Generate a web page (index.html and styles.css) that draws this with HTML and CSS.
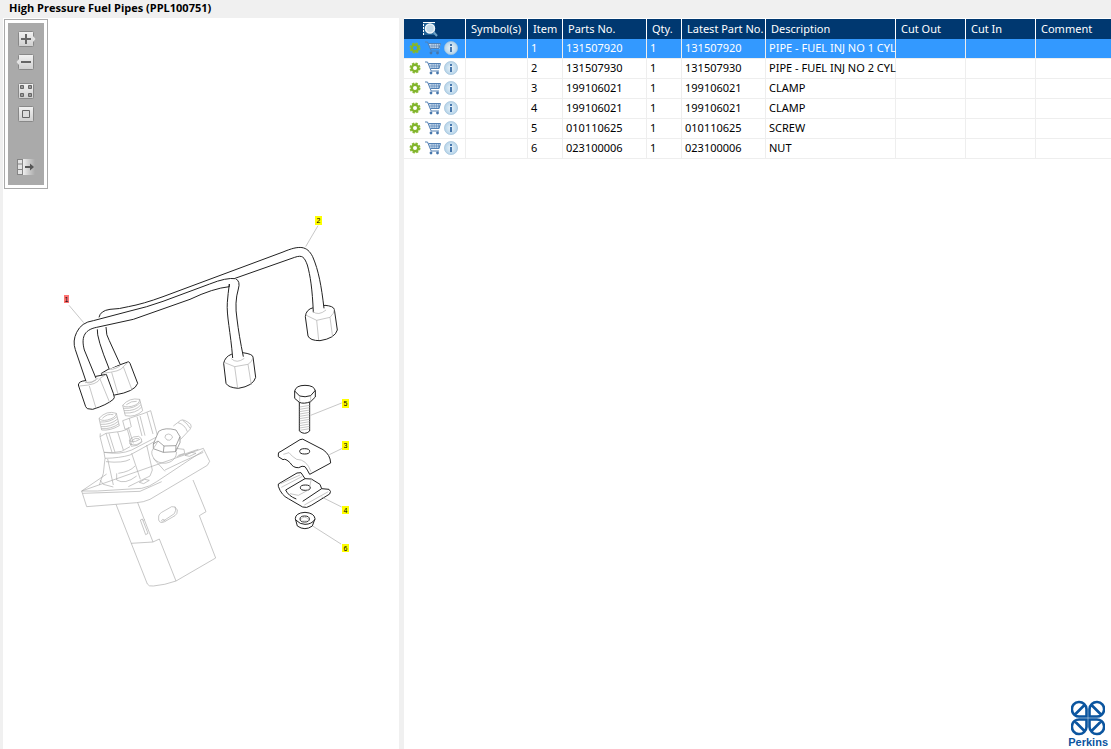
FILE: index.html
```html
<!DOCTYPE html>
<html lang="en">
  <head>
    <meta charset="utf-8">
    <title>High Pressure Fuel Pipes</title>
    <link rel="stylesheet" href="styles.css">
  </head>
  <body>
    <svg width="0" height="0" class="defs" aria-hidden="true">
      <defs>
        <linearGradient id="face" x1="0" y1="0" x2="0" y2="1">
          <stop offset="0" stop-color="#f2f2f2"/><stop offset="1" stop-color="#cfcfcf"/>
        </linearGradient>
        <linearGradient id="fade">
          <stop offset="0" stop-color="#eee"/><stop offset="1" stop-color="#aaa"/>
        </linearGradient>
        <radialGradient id="glass">
          <stop offset="0" stop-color="#eef6fb"/><stop offset="1" stop-color="#b3d2e8"/>
        </radialGradient>
        <symbol id="gear" viewBox="0 0 12 12">
          <circle cx="6" cy="6" r="4.7" fill="none" stroke="#8abb35" stroke-width="1.6" stroke-dasharray="2.3 1.39"/>
          <circle cx="6" cy="6" r="3.2" fill="none" stroke="#82b52c" stroke-width="2.4"/>
        </symbol>
        <symbol id="cart" viewBox="0 0 16 14">
          <path d="M3.500 3h12l-1 5H6z" fill="#c3d8ec"/>
          <path d="M0 1h2.500l3.700 9H14M3.500 2.500h12L14 7.500H5.500" fill="none" stroke="#5482b5"/>
          <path d="M7 3v5M9.200 3v5M11.400 3v5M13.400 3v5M4.400 5h10.400" fill="none" stroke="#5482b5" stroke-width=".6"/>
          <circle cx="6" cy="12" r="1.4" fill="#4676ab"/><circle cx="12.500" cy="12" r="1.4" fill="#4676ab"/>
        </symbol>
        <symbol id="info" viewBox="0 0 14 14">
          <circle cx="7" cy="7" r="6.6" fill="url(#glass)" stroke="#a3c3db" stroke-width=".7"/>
          <path d="M6 3h2v2H6zM6 6h2v5H6z" fill="#4878ad"/>
        </symbol>
      </defs>
    </svg>

    <h1 class="title">High Pressure Fuel Pipes (PPL100751)</h1>
    <main class="panes">
      <section class="drawing">
        <div class="toolbar">
          <div class="tools">
            <button aria-label="Zoom in"><svg width="20" height="16" viewBox="0 0 20 16">
              <rect x="2.5" y=".5" width="15" height="15" rx="1" fill="url(#face)" stroke="#888"/>
              <path d="M17 5l2.500 3-2.500 3z" fill="#e4e4e4"/>
              <path d="M10 3v10M5 8h10" stroke="#666" stroke-width="2"/></svg></button>
            <button aria-label="Zoom out"><svg width="20" height="16" viewBox="0 0 20 16">
              <rect x="2.5" y=".5" width="15" height="15" rx="1" fill="url(#face)" stroke="#888"/>
              <path d="M3 5L.5 8 3 11z" fill="#e4e4e4"/>
              <path d="M5 8h10" stroke="#666" stroke-width="2"/></svg></button>
            <button class="fit" aria-label="Fit page"><svg width="20" height="16" viewBox="0 0 20 16">
              <rect x="2.5" y=".5" width="15" height="15" rx="1" fill="url(#face)" stroke="#888"/>
              <path d="M4.500 2.500h3v3h-3zM12.500 2.500h3v3h-3zM4.500 10.500h3v3h-3zM12.500 10.500h3v3h-3z" fill="#999" stroke="#666"/></svg></button>
            <button aria-label="Actual size"><svg width="20" height="16" viewBox="0 0 20 16">
              <rect x="2.5" y=".5" width="15" height="15" rx="1" fill="url(#face)" stroke="#888"/>
              <path d="M6.500 4.500h7v7h-7z" fill="#ddd" stroke="#666"/></svg></button>
            <button class="move" aria-label="Hide list"><svg width="20" height="16" viewBox="0 0 20 16">
              <rect x="7" y="0" width="12" height="16" fill="url(#fade)"/>
              <path d="M1 0h5v16H1z" fill="#e4e4e4"/>
              <path d="M1.500 0v16M1 .5h5M1 5h5M1 10.500h5M1 15.500h5M6.500 0v16" fill="none" stroke="#858585"/>
              <path d="M9 8h6" stroke="#555" stroke-width="2"/>
              <path d="M14 4.500l4 3.500-4 3.500z" fill="#555"/></svg></button>
          </div>
        </div>

        <!-- drawing units are a third of a pixel -->
        <svg class="diagram" viewBox="0 0 1188 1260" role="img" aria-label="Exploded view of the fuel pipes">
          <!-- pump -->
          <g class="faint" transform="translate(201 603)">
            <path d="M35 303L400 175L419 214L412 226L240 328Q220 337 200 338L50 350L35 303L82 303L215 295Q240 290 260 275L400 182"/>
            <path d="M35 303L110 252M38 310L210 304L275 275M320 200L385 178M285 240L335 216L400 187M345 196L365 187L378 190L358 199ZM208 277L224 268L238 271L221 281Z"/>
            <path d="M102 187L105 205Q150 204 180 195L262 150Q270 143 264 136M102 187Q150 195 185 180L258 142M105 205L100 250L88 285M113 207L130 285M185 190L211 268M230 165L247 240L240 258L175 290"/>
            <path d="M108 215Q160 220 180 208M145 250Q180 245 195 228M140 270Q165 285 200 258M140 250L140 270M90 270L100 283L130 291"/>
            <path d="M90 140L102 187Q130 190 155 184L180 170M90 140L108 130L153 124L172 118L185 165M108 130L126 187M117 130L135 187M143 126L160 180M90 140L91 130"/>
            <path d="M87 85L95 120M139 70L148 107M95 120Q120 123 148 107M87 85Q110 60 139 70Q137 84 112 90Q94 94 87 85M97 85Q112 70 130 74M90 96Q120 98 141 80M92 103Q122 105 143 87M93 110Q123 112 145 94M94 116Q124 118 147 101"/>
            <path d="M158 46L166 77M209 28L218 62M166 77Q197 83 218 62M158 46Q178 22 209 28Q209 43 185 49Q164 53 158 46M169 44Q185 32 200 34M160 55Q195 57 211 37M162 62Q197 64 213 44M163 69Q198 71 215 51"/>
            <path d="M158 92L178 85L222 70L242 62L262 135M158 92L165 118L182 112M178 85L184 111M201 80L216 138M210 78L225 137M231 67L249 132M175 112L190 160"/>
            <path d="M178 150Q190 137 206 139Q218 146 215 154Q200 170 180 162ZM180 160L184 169Q202 170 217 155M185 152Q196 142 207 146M181 154Q197 158 211 147"/>
            <path d="M310 108L332 91Q342 86 362 103Q366 110 360 118L332 148M338 91Q352 100 360 114M324 98Q345 104 352 125M317 175L342 178L344 190L325 196"/>
            <path class="mid" d="M250 162L266 124Q285 111 318 120L330 140L318 167L282 168L264 153ZM282 168L280 187L317 185L318 167M280 187L250 176L250 162M330 140V158L317 185"/>
            <path d="M285 142Q284 133 295 132Q308 134 307 144Q300 154 291 150ZM249 177Q239 190 255 210Q277 226 300 216Q318 208 320 186M250 205L285 244M264 154L250 176"/>
          </g>
          <g class="faint" transform="translate(321 873)">
            <path d="M18 73L63 188L112 312Q116 320 130 318Q165 315 198 303L317 234L268 107L288 95L249 0"/>
            <path d="M83 68L129 186L148 177L198 303M63 190L129 186M91 120L97 117L114 160L107 164ZM100 122L104 118"/>
            <path d="M146 108Q148 101 155 97L185 80Q196 77 202 90Q203 102 195 107L164 125Q150 132 146 120ZM154 124Q157 113 166 123M195 80Q200 91 193 101L157 125"/>
          </g>

          <!-- pipe 2, then pipe 1 in front of it -->
          <g class="line">
            <path class="solid" transform="translate(141 63)" d="M154 490L178 476L236 455L240 460L263 520Q255 545 194 555L176 560Z"/>
            <path class="solid" transform="translate(561 63)" d="M346 320Q348 298 370 293L405 286Q430 288 433 298L442 360Q435 385 390 392Q360 392 354 378Z"/>
            <path class="fill" d="M319 541L283 443Q278 370 321 361C370 350 380 365 480 327L861 183C910 168 918 180 936 223Q950 260 963 358L931 370Q925 270 913 228C905 203 900 195 881 203L696 268L400 370Q300 390 309 440L351 525Z"/>
            <path d="M319 541Q280 445 283 421M288 385Q292 365 321 361Q350 360 376 353Q420 345 480 323L840 189C890 168 912 170 929 203C947 245 955 290 963 358M931 370C928 300 922 260 913 228C904 204 898 197 875 205L696 268M351 525L319 455Q309 440 309 414"/>
            <path class="solid" transform="translate(141 63)" d="M85 525Q86 514 105 512L138 499L169 493L190 550Q196 565 190 568Q170 585 128 598L112 596L107 590Z"/>
            <path class="solid" transform="translate(561 63)" d="M101 460Q105 440 124 433L158 428Q188 432 189 441L197 502Q190 528 145 535Q115 533 108 520Z"/>
            <path class="fill" d="M249 577L214 462Q210 405 266 396L386 366L600 290C660 266 705 255 708 280L700 340L721 503L689 507Q670 380 680 285L591 309L391 387Q300 405 260 415Q238 425 241 463L279 568Z"/>
            <path d="M249 577L217 482Q208 456 221 430Q235 400 271 395L381 366Q430 355 480 337L620 285Q670 265 698 269Q713 277 706 300Q694 340 702 390Q708 440 721 503M689 507C683 430 670 380 673 340Q675 315 679 285V293Q630 298 561 331L391 391L281 415C240 423 235 449 244 483L279 568"/>
          </g>
          <g class="faint" transform="translate(141 63)">
            <path class="edge" d="M88 528Q145 525 150 505L169 493M118 528L138 595M150 507L180 580M108 515Q115 525 138 510M105 518Q125 520 145 505M154 490Q215 485 220 470L236 455M185 487L204 552M220 470L246 540M176 476Q185 483 210 468M101 338L57 286"/>
          </g>
          <g class="faint" transform="translate(561 63)">
            <path class="edge" d="M102 457L134 470L174 463Q188 455 189 441M134 470L143 535M174 463L184 525M124 446Q140 462 163 445M347 315L380 331L420 322Q433 310 433 298M380 331L386 390M420 322L428 382M368 304Q385 319 408 300M347 110L384 47"/>
          </g>

          <!-- screw, clamps and nut -->
          <g transform="translate(786 558)">
            <g class="line">
              <path class="solid" d="M103 78V168Q119 182 134 168V78Z"/>
              <path class="solid" d="M89 48Q93 31 120 31Q148 31 151 48V66L137 80Q116 88 103 82L89 70Z"/>
              <path d="M89 48L104 63Q120 68 137 62L151 46"/>
              <path class="solid" d="M40 237Q38 232 48 229L105 194Q114 190 120 196L174 224Q196 239 197 264L134 298Q127 284 120 275Q112 271 101 278Q84 279 76 264Q61 249 54 254L40 245Z"/>
              <path class="solid" d="M40 327L96 294L108 293L120 311L139 312L165 328L170 341L192 343Q200 349 194 357L139 391Q124 401 113 396L70 371Q49 361 40 334Z"/>
              <path d="M62 345L120 311M113 379L170 341M62 345Q70 363 94 372"/>
              <path class="solid" d="M91 431Q91 414 120 412Q148 414 150 431L142 453Q120 469 97 453Z"/>
              <path d="M91 434Q106 449 120 448Q140 448 150 433"/>
              <ellipse cx="119" cy="229" rx="15" ry="8"/><ellipse cx="121" cy="338" rx="15" ry="8"/><ellipse cx="119" cy="432" rx="14" ry="9"/>
            </g>
            <g class="faint">
              <path class="edge" d="M104 63V80M137 63V79M104 96L134 91M104 103L134 98M104 110L134 105M104 117L134 112M104 124L134 119M104 131L134 126M104 138L134 133M104 145L134 140M104 152L134 147M104 159L134 154M104 166L134 161M108 433Q118 420 130 433M111 438H128M55 238L72 233Q80 244 95 253Q125 253 138 290M47 326L105 300M49 337L112 304M75 356L100 361L132 344L139 312M118 390L190 350"/>
              <path class="edge" d="M137 121L230 84M193 239L232 220M170 366L230 396M143 453L228 507"/>
            </g>
          </g>

          <g class="tags">
            <rect class="picked" x="183" y="318" width="15" height="24"/><text x="190" y="338">1</text>
            <rect x="936" y="81" width="21" height="27"/><text x="946" y="103">2</text>
            <rect x="1017" y="630" width="21" height="27"/><text x="1027" y="651">5</text>
            <rect x="1017" y="756" width="21" height="27"/><text x="1027" y="778">3</text>
            <rect x="1017" y="951" width="21" height="24"/><text x="1027" y="971">4</text>
            <rect x="1017" y="1065" width="21" height="24"/><text x="1027" y="1085">6</text>
          </g>
        </svg>
      </section>

      <section class="parts">
        <table>
          <colgroup>
            <col class="c-icons"><col class="c-symbol"><col class="c-item"><col class="c-part"><col class="c-qty"><col class="c-part"><col class="c-desc"><col class="c-cut"><col class="c-cut"><col>
          </colgroup>
          <thead>
            <tr>
              <th class="find"><button aria-label="Search parts"><svg width="18" height="16" viewBox="0 0 18 16">
                <rect x="2" y="1" width="12" height="13" fill="#1d6096"/>
                <path d="M2 1.500h12" stroke="#fff"/>
                <path d="M2.500 3v11" stroke="#fff" stroke-dasharray="2 1"/>
                <circle cx="9" cy="7.500" r="4.500" fill="#c4dbea" stroke="#eef5fa" stroke-width="1.500"/>
                <path d="M12.500 11l3.500 4" stroke="#6a9fc4" stroke-width="2"/></svg></button></th>
              <th>Symbol(s)</th><th>Item</th><th>Parts No.</th><th>Qty.</th><th>Latest Part No.</th><th>Description</th><th>Cut Out</th><th>Cut In</th><th>Comment</th>
            </tr>
          </thead>
          <tbody>
            <tr class="selected">
              <td><div class="icons"><button aria-label="Options"><svg width="12" height="12"><use href="#gear"/></svg></button><button aria-label="Add to cart"><svg width="16" height="14"><use href="#cart"/></svg></button><button aria-label="Information"><svg width="14" height="14"><use href="#info"/></svg></button></div></td>
              <td></td><td>1</td><td>131507920</td><td>1</td><td>131507920</td><td>PIPE - FUEL INJ NO 1 CYL</td><td></td><td></td><td></td>
            </tr>
            <tr>
              <td><div class="icons"><button aria-label="Options"><svg width="12" height="12"><use href="#gear"/></svg></button><button aria-label="Add to cart"><svg width="16" height="14"><use href="#cart"/></svg></button><button aria-label="Information"><svg width="14" height="14"><use href="#info"/></svg></button></div></td>
              <td></td><td>2</td><td>131507930</td><td>1</td><td>131507930</td><td>PIPE - FUEL INJ NO 2 CYL</td><td></td><td></td><td></td>
            </tr>
            <tr>
              <td><div class="icons"><button aria-label="Options"><svg width="12" height="12"><use href="#gear"/></svg></button><button aria-label="Add to cart"><svg width="16" height="14"><use href="#cart"/></svg></button><button aria-label="Information"><svg width="14" height="14"><use href="#info"/></svg></button></div></td>
              <td></td><td>3</td><td>199106021</td><td>1</td><td>199106021</td><td>CLAMP</td><td></td><td></td><td></td>
            </tr>
            <tr>
              <td><div class="icons"><button aria-label="Options"><svg width="12" height="12"><use href="#gear"/></svg></button><button aria-label="Add to cart"><svg width="16" height="14"><use href="#cart"/></svg></button><button aria-label="Information"><svg width="14" height="14"><use href="#info"/></svg></button></div></td>
              <td></td><td>4</td><td>199106021</td><td>1</td><td>199106021</td><td>CLAMP</td><td></td><td></td><td></td>
            </tr>
            <tr>
              <td><div class="icons"><button aria-label="Options"><svg width="12" height="12"><use href="#gear"/></svg></button><button aria-label="Add to cart"><svg width="16" height="14"><use href="#cart"/></svg></button><button aria-label="Information"><svg width="14" height="14"><use href="#info"/></svg></button></div></td>
              <td></td><td>5</td><td>010110625</td><td>1</td><td>010110625</td><td>SCREW</td><td></td><td></td><td></td>
            </tr>
            <tr>
              <td><div class="icons"><button aria-label="Options"><svg width="12" height="12"><use href="#gear"/></svg></button><button aria-label="Add to cart"><svg width="16" height="14"><use href="#cart"/></svg></button><button aria-label="Information"><svg width="14" height="14"><use href="#info"/></svg></button></div></td>
              <td></td><td>6</td><td>023100006</td><td>1</td><td>023100006</td><td>NUT</td><td></td><td></td><td></td>
            </tr>
          </tbody>
        </table>

        <div class="brand">
          <svg width="34" height="36" viewBox="0 0 34 36" aria-hidden="true">
            <g fill="none" stroke="#0b559f" stroke-width="2.6">
              <path id="petal" d="M15.500 16.500H9A7.300 7.300 0 1 1 15.500 9ZM4.500 14L14 4.500"/>
              <use href="#petal" transform="matrix(-1 0 0 1 34 0)"/>
              <use href="#petal" transform="matrix(1 0 0 -1 0 36)"/>
              <use href="#petal" transform="rotate(180 17 18)"/>
            </g>
          </svg>
          <span>Perkins</span>
        </div>
      </section>
    </main>
  </body>
</html>
```
FILE: styles.css
```css
* {
  box-sizing: border-box;
}

body {
  margin: 0;
  min-height: 100vh;
  display: flex;
  flex-direction: column;
  background: #f0f0f0;
  color: #000;
  font-family: "Noto Sans", sans-serif;
  font-size: 11px;
}

.defs {
  position: absolute;
}

.title {
  margin: 0;
  padding-left: 9px;
  font-family: "Open Sans", sans-serif;
  font-size: 11px;
  line-height: 16px;
  height: 18px;
  font-weight: bold;
}

button {
  display: block;
  padding: 0;
  border: 0;
  background: none;
  cursor: pointer;
}

button svg {
  display: block;
}

.panes {
  flex: 1;
  display: grid;
  grid-template-columns: 396px minmax(0, 1fr);
  gap: 5px;
  padding-left: 3px;
}

.drawing {
  background: #fff;
  padding-top: 1px;
}

.toolbar {
  width: 44px;
  margin-left: 1px;
  padding: 3px;
  border: 1px solid #aaa;
}

.tools {
  display: flex;
  flex-direction: column;
  align-items: center;
  gap: 7px;
  padding: 8px 0 10px;
  background: #aaa;
}

.tools .fit {
  margin-top: 6px;
}

.tools .move {
  margin-top: 30px;
}

.diagram {
  display: block;
  width: 100%;
}

.line path,
.line ellipse {
  fill: none;
  stroke: #222;
  stroke-width: 3;
  stroke-linejoin: round;
}

.line .solid {
  fill: #fff;
}

.line .fill {
  fill: #fff;
  stroke: none;
}

.faint path {
  fill: none;
  stroke: #aaa;
  stroke-width: 2;
}

.faint .mid {
  fill: #fff;
  stroke: #777;
}

.faint .edge {
  stroke: #aaa;
}

.tags rect {
  fill: #ff0;
}

.tags .picked {
  fill: #ff7373;
}

.tags text {
  font-family: "Liberation Sans", sans-serif;
  font-size: 21px;
  text-anchor: middle;
}

.parts {
  display: flex;
  flex-direction: column;
  background: #fff;
  padding-top: 1px;
}

table {
  width: 100%;
  table-layout: fixed;
  border-collapse: separate;
  border-spacing: 0;
}

.c-icons,
.c-symbol {
  width: 62px;
}

.c-item,
.c-qty {
  width: 35px;
}

.c-part {
  width: 84px;
}

.c-desc {
  width: 130px;
}

.c-cut {
  width: 70px;
}

th,
td {
  height: 20px;
  padding: 0 0 0 3px;
  border-right: 1px solid #eee;
  line-height: 18px;
  text-align: left;
  white-space: nowrap;
}

th {
  padding-left: 5px;
  border-color: #fff;
  background: #003870;
  color: #fff;
  font-weight: normal;
}

td {
  padding-bottom: 1px;
  border-bottom: 1px solid #eee;
}

th:last-child,
td:last-child {
  border-right: 0;
}

.find button {
  margin-left: 12px;
}

.selected td {
  background: #39f;
  color: #fff;
}

.icons {
  display: flex;
  align-items: center;
  gap: 4px;
  padding-left: 2px;
}

.icons button:last-child {
  margin-left: -1px;
}

.brand {
  display: flex;
  flex-direction: column;
  align-items: center;
  align-self: flex-end;
  margin-top: auto;
  padding-right: 3px;
  color: #0b559f;
  font-family: "Liberation Sans", sans-serif;
  font-weight: bold;
  font-size: 11px;
  line-height: 13px;
}
```
